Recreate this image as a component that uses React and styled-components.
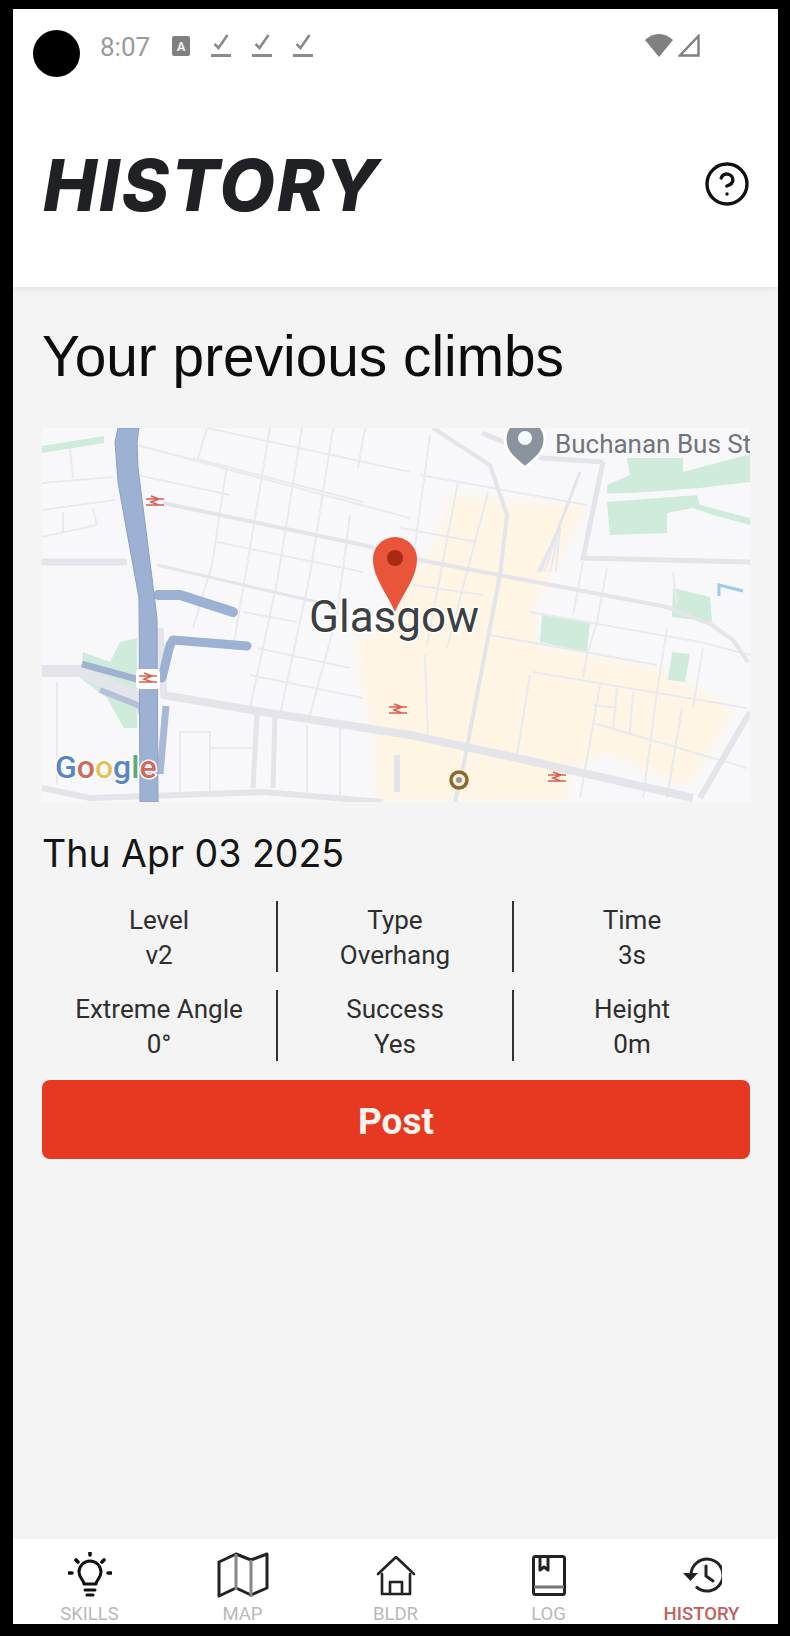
import styled, { createGlobalStyle } from "styled-components";
import { CircleHelp } from "lucide-react";

const GlobalStyle = createGlobalStyle`
  html, body {
    margin: 0;
    padding: 0;
    background: #000;
  }
`;

const Frame = styled.div`
  width: 790px;
  height: 1636px;
  box-sizing: border-box;
  padding: 9px 12px 12px 13px;
  background: #000;
  display: flex;
  font-family: Inter, "Liberation Sans", sans-serif;
`;

const Screen = styled.div`
  flex: 1;
  display: flex;
  flex-direction: column;
  background: #f4f4f4;
`;

const Header = styled.header`
  height: 278px;
  flex-shrink: 0;
  background: #fff;
  box-shadow: 0 2px 6px rgba(0, 0, 0, 0.08);
  padding-top: 21px;
  box-sizing: border-box;
`;

const StatusBar = styled.div`
  display: flex;
  align-items: center;
  height: 47px;
  padding: 0 78px 0 20px;
`;

const Camera = styled.div`
  width: 47px;
  height: 47px;
  border-radius: 50%;
  background: #000;
  margin-right: 20px;
`;

const Time = styled.span`
  font-family: Roboto, sans-serif;
  font-size: 26px;
  color: #9a9a9a;
  margin-right: 22px;
  position: relative;
  top: -7px;
`;

const StatusIcons = styled.div`
  display: flex;
  align-items: center;
  gap: 21px;
  position: relative;
  top: -8px;
`;

const SignalIcons = styled(StatusIcons)`
  gap: 5px;
  margin-left: auto;
`;

const TitleRow = styled.div`
  display: flex;
  align-items: center;
  justify-content: space-between;
  height: 72px;
  margin-top: 71px;
  padding: 0 27px 0 30px;
`;

const Title = styled.h1`
  margin: 0;
  font-size: 72px;
  font-weight: 800;
  font-style: italic;
  letter-spacing: 2px;
  color: #202124;
`;

const Content = styled.main`
  flex: 1;
  padding: 41px 28px 0 29px;
`;

const Heading = styled.h2`
  margin: 0 0 42px;
  font-family: "Liberation Sans", Arial, sans-serif;
  font-size: 56.8px;
  line-height: 58px;
  font-weight: 400;
  color: #0c0c0c;
`;

const MapBox = styled.div`
  height: 374px;
  background: #f8f8fa;
  overflow: hidden;
  svg {
    display: block;
  }
`;

const DateLine = styled.div`
  margin-top: 30px;
  font-size: 37.5px;
  line-height: 44px;
  color: #151515;
`;

const StatsGrid = styled.div`
  display: grid;
  grid-template-columns: repeat(3, 1fr);
  row-gap: 18px;
  margin-top: 25px;
`;

const Stat = styled.div`
  height: 71px;
  display: flex;
  flex-direction: column;
  justify-content: center;
  align-items: center;
  font-family: Roboto, sans-serif;
  font-size: 26px;
  line-height: 35px;
  color: #2e2e2e;
  padding-top: 2px;
  box-sizing: border-box;
  border-right: ${(p) => (p.$last ? "none" : "2px solid #333")};
`;

const PostButton = styled.button`
  display: block;
  width: 100%;
  height: 79px;
  margin-top: 19px;
  padding-top: 4px;
  border: none;
  border-radius: 8px;
  background: #e73822;
  color: #fbf3ee;
  font-family: Roboto, sans-serif;
  font-size: 37px;
  font-weight: 700;
`;

const NavBar = styled.nav`
  height: 85px;
  flex-shrink: 0;
  display: grid;
  grid-template-columns: repeat(5, 1fr);
  background: #fff;
`;

const NavItem = styled.div`
  display: flex;
  flex-direction: column;
  align-items: center;
`;

const NavIcon = styled.div`
  height: 64px;
  padding-top: 8px;
  box-sizing: border-box;
  display: flex;
  align-items: center;
  justify-content: center;
`;

const NavLabel = styled.span`
  font-family: Roboto, sans-serif;
  font-size: 18.5px;
  line-height: 22px;
  font-weight: ${(p) => (p.$active ? 500 : 400)};
  color: ${(p) => (p.$active ? "#c4605f" : "#b9b9b9")};
`;

const CheckIcon = () => (
  <svg width="20" height="24" viewBox="0 0 20 24">
    <path d="M3.5 10l4 4 9-13" fill="none" stroke="#8a8a8a" strokeWidth="2.6" />
    <rect x="0" y="20" width="20" height="3" fill="#8a8a8a" />
  </svg>
);

const LangIcon = () => (
  <svg width="18" height="20" viewBox="0 0 18 20">
    <rect width="18" height="20" rx="2" fill="#808080" />
    <text x="9" y="15" textAnchor="middle" fontSize="13" fontWeight="700" fontFamily="Roboto, sans-serif" fill="#eee">A</text>
  </svg>
);

const WifiIcon = () => (
  <svg width="28" height="23" viewBox="0 0 28 23">
    <path d="M14 23L0 6C4 2 9 0 14 0s10 2 14 6z" fill="#808080" />
  </svg>
);

const CellIcon = () => (
  <svg width="22" height="23" viewBox="0 0 22 23">
    <path d="M20.5 2v19.5H2z" fill="none" stroke="#808080" strokeWidth="2.4" />
  </svg>
);

const BulbIcon = () => (
  <svg width="44" height="46" viewBox="0 0 44 46" fill="none" stroke="#111" strokeWidth="3" strokeLinecap="round">
    <path d="M16 32c0-4-5-6-5-12a11 11 0 0 1 22 0c0 6-5 8-5 12z" strokeLinejoin="round" />
    <path d="M17 38h10M19 43h6" />
    <path d="M22 1v2M8 8l2 2M36 8l-2 2M1 21h3M40 21h3" strokeWidth="3.6" />
  </svg>
);

const MapIcon = () => (
  <svg width="52" height="46" viewBox="0 0 52 46" fill="none" stroke="#222" strokeWidth="3" strokeLinejoin="round">
    <path d="M2 10l17-8 15 6 16-6v34l-16 7-15-7-17 8z" />
    <path d="M19 2v36M34 8v37" stroke="#888" />
  </svg>
);

const HouseIcon = () => (
  <svg width="40" height="42" viewBox="0 0 40 42" fill="none" stroke="#222" strokeWidth="2.6" strokeLinecap="round" strokeLinejoin="round">
    <path d="M2 20L20 3l18 17" />
    <path d="M6 20v20h28V20" />
    <path d="M14 40V28h12v12" />
  </svg>
);

const BookIcon = () => (
  <svg width="34" height="41" viewBox="0 0 34 41" fill="none" stroke="#222" strokeWidth="3" strokeLinejoin="round">
    <rect x="1.5" y="1.5" width="31" height="38" rx="2" />
    <path d="M8 2v13l4-3 4 3V2" />
    <path d="M2 32h30" stroke="#777" />
  </svg>
);

const HistoryIcon = () => (
  <svg width="40" height="36" viewBox="0 0 40 36" fill="none" stroke="#222" strokeWidth="3">
    <path d="M9 18a16 16 0 1 1 5 11.7" />
    <path d="M1 16h15l-7.5 8z" fill="#222" stroke="none" />
    <path d="M24 9v10l7 5" strokeLinecap="round" />
  </svg>
);

const parks = [
  "565,57 588,47 585,30 641,30 641,44 705,27 708,27 708,54 658,60 565,67",
  "565,74 655,67 658,77 708,90 708,97 671,87 651,80 625,85 625,105 568,107",
  "500,187 548,195 545,224 498,214",
  "631,160 668,169 670,194 630,189",
  "630,224 648,226 643,254 626,252",
  "0,18 62,8 62,15 0,25",
  "41,224 68,234 78,214 95,210 95,300 82,300 65,270 38,250",
];

const thinStreets = [
  "185,37 170,137 151,200",
  "228,0 208,120 191,220",
  "260,0 235,154 208,280",
  "291,0 268,147 238,287",
  "308,87 295,187 266,294",
  "165,0 156,30",
  "323,0 316,40",
  "165,0 368,44",
  "95,17 368,90",
  "151,30 321,74",
  "95,47 188,67",
  "175,114 321,144",
  "115,137 275,174",
  "201,184 255,194",
  "215,220 308,240",
  "208,247 321,270",
  "0,55 71,49",
  "0,82 73,72",
  "0,109 55,97",
  "21,84 21,104",
  "51,80 55,97",
  "28,20 31,50",
  "15,254 15,357",
  "138,364 138,304 168,304 168,364",
  "168,320 211,320",
  "265,297 265,364",
  "298,297 298,367",
  "388,7 368,154",
  "416,54 385,217",
  "383,227 386,314",
  "446,64 405,220",
  "378,47 545,77",
  "358,100 435,114",
  "371,157 441,167",
  "448,207 615,237",
  "488,184 658,214 708,227",
  "491,244 705,280",
  "488,247 475,327",
  "558,257 538,370",
  "545,227 541,250",
  "625,200 615,264 601,370",
  "661,220 651,280",
  "575,260 571,300",
  "591,264 588,304",
  "551,277 575,280",
  "551,295 705,340",
  "631,144 635,177",
  "565,140 555,194 545,227",
  "531,187 541,134",
  "640,280 625,370",
  "518,100 495,144",
  "518,100 502,144",
  "518,100 508,144",
  "518,100 514,144",
];

const heavyStreets = [
  { points: "121,75 321,117 378,132 625,179 670,197 691,212 706,234", width: 4 },
  { points: "0,134 85,134", width: 7 },
  { points: "115,137 275,174", width: 3 },
  { points: "391,0 448,37 465,87 458,147 421,340 413,374", width: 4 },
  { points: "538,44 515,104 498,144", width: 3 },
  { points: "440,5 501,30 561,34", width: 5 },
  { points: "561,34 541,130 708,134", width: 5 },
  { points: "121,267 221,284 368,307 475,330 651,370", width: 8 },
  { points: "0,243 38,243 98,270", width: 12 },
  { points: "0,360 48,370 221,364 341,374", width: 6 },
  { points: "215,287 211,360", width: 5 },
  { points: "233,287 231,360", width: 5 },
  { points: "355,327 355,364", width: 6 },
  { points: "708,284 658,370", width: 6 },
  { points: "118,200 122,270", width: 7 },
];

const railMarks = [
  { x: 113, y: 74 },
  { x: 106, y: 251, plate: true },
  { x: 356, y: 282 },
  { x: 515, y: 350 },
];

const RailMark = ({ x, y, plate }) => (
  <g transform={`translate(${x} ${y})`} stroke="#d8604f" strokeWidth="1.6" fill="none">
    {plate && <rect x="-12" y="-10" width="24" height="20" rx="4" fill="#fff" stroke="none" />}
    <path d="M-9 -3h18M-9 3h18M-4 -6l8 3-8 3 8 3" />
  </g>
);

const CityMap = () => (
  <svg width="708" height="374" viewBox="0 0 708 374">
    <defs>
      <filter id="soft">
        <feGaussianBlur stdDeviation="0.6" />
      </filter>
      <filter id="softer">
        <feGaussianBlur stdDeviation="4" />
      </filter>
    </defs>
    <polygon
      fill="#fef5e5"
      filter="url(#softer)"
      points="408,67 545,77 518,130 491,184 498,217 615,240 691,280 665,330 645,360 565,324 531,340 525,374 335,374 331,314 311,210 345,205 350,180 391,120"
    />
    <g filter="url(#soft)">
      {parks.map((points) => (
        <polygon key={points} points={points} fill="#cfebdc" />
      ))}
      <polyline points="565,67 705,64" fill="none" stroke="#f8f8fa" strokeWidth="3" />
      <g fill="none" stroke="#e9eaef" strokeWidth="2">
        {thinStreets.map((points) => (
          <polyline key={points} points={points} />
        ))}
      </g>
      <g fill="none" stroke="#e3e5ea">
        {heavyStreets.map((s) => (
          <polyline key={s.points} points={s.points} strokeWidth={s.width} />
        ))}
      </g>
      <path d="M40 236l58 16" fill="none" stroke="#9fb2d1" strokeWidth="7" />
      <path d="M58 262l40 16 6 30" fill="none" stroke="#b4c1d8" strokeWidth="6" />
      <path d="M124 278l-6 68" fill="none" stroke="#a9b8d3" strokeWidth="7" />
      <g fill="none" stroke="#9db1d2" strokeLinecap="round" strokeLinejoin="round">
        <path d="M116 167h22l53 17" strokeWidth="10" />
        <path d="M120 250l8-33 3-5 74 6" strokeWidth="9" />
      </g>
      <path d="M76 0L73 14 76 54 86 110 97 170 98 374H116L115 190 105 110 96 40 95 14 97 0z" fill="#9db1d2" stroke="#8a9fc4" strokeWidth="1" />
    </g>
    {railMarks.map((m) => (
      <RailMark key={m.x} {...m} />
    ))}
    <path d="M677 168v-11l24 6" fill="none" stroke="#9ccbee" strokeWidth="3" />
    <circle cx="417" cy="352" r="8" fill="#f6efe0" stroke="#8a6a2c" strokeWidth="3.5" />
    <circle cx="417" cy="352" r="3" fill="#999" />
    <path d="M483 40C475 32 463 26 463 11a20 20 0 0 1 40 0c0 15-12 21-20 29z" fill="#8b939e" stroke="#fff" strokeWidth="3" />
    <circle cx="483" cy="10" r="7" fill="#f6fbfd" />
    <text x="513" y="25" fontFamily="Roboto, sans-serif" fontSize="26" fill="#70757a">Buchanan Bus St</text>
    <path d="M353 184C345 165 331 150 331 131a22 22 0 0 1 44 0C375 150 361 165 353 184z" fill="#e8553a" />
    <circle cx="353" cy="130" r="8" fill="#a82a14" />
    <text x="267" y="204" fontFamily="Roboto, sans-serif" fontSize="44" fill="#3c4043" stroke="#fff" strokeWidth="3" paintOrder="stroke">Glasgow</text>
    <text x="13" y="350" fontFamily="Roboto, sans-serif" fontWeight="500" fontSize="32" stroke="#fff" strokeWidth="3" paintOrder="stroke">
      <tspan fill="#5a85c8">G</tspan>
      <tspan fill="#cf6a5c">o</tspan>
      <tspan fill="#e3c25e">o</tspan>
      <tspan fill="#5a85c8">g</tspan>
      <tspan fill="#62a878">l</tspan>
      <tspan fill="#cf6a5c">e</tspan>
    </text>
  </svg>
);

const stats = [
  ["Level", "v2"],
  ["Type", "Overhang"],
  ["Time", "3s"],
  ["Extreme Angle", "0°"],
  ["Success", "Yes"],
  ["Height", "0m"],
];

const navItems = [
  { label: "SKILLS", Icon: BulbIcon },
  { label: "MAP", Icon: MapIcon },
  { label: "BLDR", Icon: HouseIcon },
  { label: "LOG", Icon: BookIcon },
  { label: "HISTORY", Icon: HistoryIcon, active: true },
];

const App = () => {
  return (
    <Frame>
      <GlobalStyle />
      <Screen>
        <Header>
          <StatusBar>
            <Camera />
            <Time>8:07</Time>
            <StatusIcons>
              <LangIcon />
              <CheckIcon />
              <CheckIcon />
              <CheckIcon />
            </StatusIcons>
            <SignalIcons>
              <WifiIcon />
              <CellIcon />
            </SignalIcons>
          </StatusBar>
          <TitleRow>
            <Title>HISTORY</Title>
            <CircleHelp size={48} strokeWidth={1.7} color="#111" />
          </TitleRow>
        </Header>
        <Content>
          <Heading>Your previous climbs</Heading>
          <MapBox>
            <CityMap />
          </MapBox>
          <DateLine>Thu Apr 03 2025</DateLine>
          <StatsGrid>
            {stats.map(([name, value], i) => (
              <Stat key={name} $last={i % 3 === 2}>
                <span>{name}</span>
                <span>{value}</span>
              </Stat>
            ))}
          </StatsGrid>
          <PostButton>Post</PostButton>
        </Content>
        <NavBar>
          {navItems.map(({ label, Icon, active }) => (
            <NavItem key={label}>
              <NavIcon>
                <Icon />
              </NavIcon>
              <NavLabel $active={active}>{label}</NavLabel>
            </NavItem>
          ))}
        </NavBar>
      </Screen>
    </Frame>
  );
};

export default App;
